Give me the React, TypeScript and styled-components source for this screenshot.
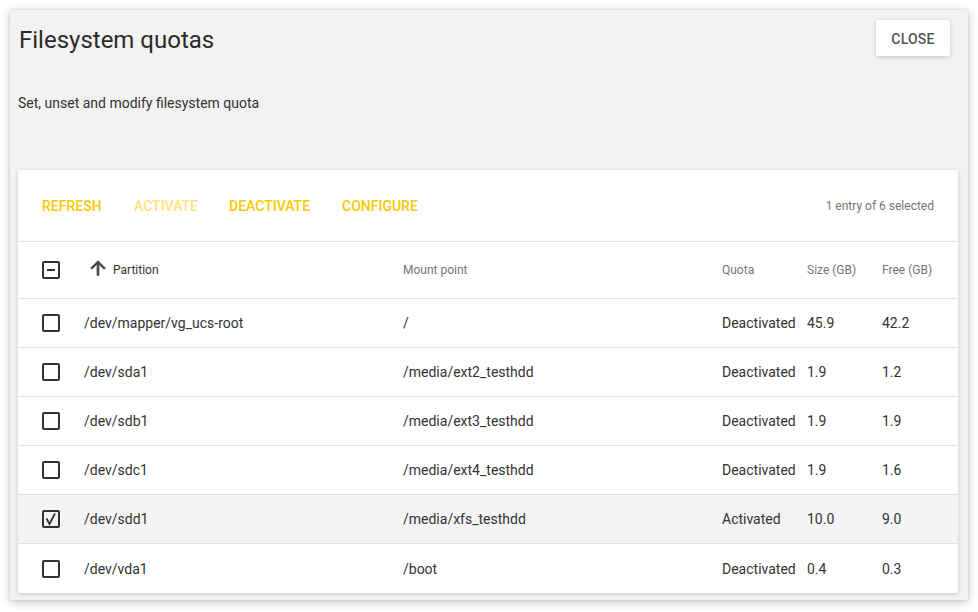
import React from "react";
import styled, { createGlobalStyle } from "styled-components";

const Global = createGlobalStyle`
  html, body { margin: 0; padding: 0; background: #ffffff; }
  body { font-family: Roboto, "Liberation Sans", Arial, sans-serif; color: #333; }
  * { box-sizing: border-box; }
`;

const Dialog = styled.div`
  margin: 10px;
  width: 958px;
  height: 590px;
  background: #f2f2f2;
  box-shadow: 0 2px 10px rgba(0, 0, 0, 0.22), 0 0 3px rgba(0, 0, 0, 0.12);
  padding: 10px 18px 7px 8px;
  display: flex;
  flex-direction: column;
  & > * { flex-shrink: 0; }
`;

const Header = styled.div`
  display: flex;
  align-items: flex-start;
  justify-content: space-between;
  height: 46px;
`;

const Title = styled.h1`
  margin: 6px 0 0 1px;
  font-size: 24px;
  font-weight: 400;
  line-height: 28px;
  color: #2a2a2a;
`;

const CloseButton = styled.button`
  height: 36px;
  width: 74px;
  border: none;
  border-radius: 2px;
  background: #fff;
  box-shadow: 0 1px 4px rgba(0, 0, 0, 0.2);
  font-family: inherit;
  font-size: 14px;
  font-weight: 500;
  color: #555;
  letter-spacing: 0.2px;
  padding-top: 2px;
`;

const Description = styled.p`
  margin: 27px 0 0 0;
  font-size: 14px;
  line-height: 20px;
  color: #333;
`;

const Card = styled.div`
  margin-top: 57px;
  width: 940px;
  background: #fff;
  box-shadow: 0 1px 4px rgba(0, 0, 0, 0.2);
  display: flex;
  flex-direction: column;
`;

const Toolbar = styled.div`
  height: 72px;
  display: flex;
  align-items: center;
  padding: 0 24px;
  border-bottom: 1px solid #e0e0e0;
`;

const Actions = styled.div`
  display: flex;
  flex: 1;
`;

const ActionButton = styled.button<{ $disabled?: boolean; $width: number }>`
  border: none;
  background: none;
  padding: 0;
  margin: 0;
  width: ${(p) => p.$width}px;
  text-align: left;
  font-family: inherit;
  font-size: 14px;
  font-weight: 500;
  text-transform: uppercase;
  color: ${(p) => (p.$disabled ? "#ffe37a" : "#fbc800")};
`;

const Status = styled.span`
  font-size: 12px;
  color: #757575;
`;

const Row = styled.div<{ $header?: boolean; $selected?: boolean; $last?: boolean }>`
  display: grid;
  grid-template-columns: 66px 319px 319px 85px 75px 76px;
  align-items: center;
  height: ${(p) => (p.$header ? 57 : 49)}px;
  border-bottom: ${(p) => (p.$last ? "none" : "1px solid #e0e0e0")};
  background: ${(p) => (p.$selected ? "#f4f4f4" : "#fff")};
`;

const Cell = styled.div<{ $head?: boolean; $sorted?: boolean }>`
  font-size: ${(p) => (p.$head ? 12 : 14)}px;
  color: ${(p) => (p.$head ? (p.$sorted ? "#333" : "#757575") : "#333")};
  white-space: nowrap;
  display: flex;
  align-items: center;
`;

const CheckCell = styled.div`
  padding-left: 24px;
  display: flex;
  align-items: center;
`;

const Box = styled.div`
  width: 18px;
  height: 18px;
  border: 2px solid #333;
  border-radius: 2px;
  display: flex;
  align-items: center;
  justify-content: center;
`;

const SortIcon = styled.svg`
  width: 22px;
  height: 22px;
  margin-left: 3px;
  margin-right: 4px;
  margin-top: -4px;
  fill: #444;
  stroke: #444;
  stroke-width: 0.9px;
`;

type CheckState = "none" | "checked" | "indeterminate";

const Checkbox = ({ state }: { state: CheckState }) => (
  <CheckCell>
    <Box>
      {state === "indeterminate" && (
        <svg width="14" height="14" viewBox="0 0 14 14">
          <rect x="3" y="6" width="8" height="2" fill="#333" />
        </svg>
      )}
      {state === "checked" && (
        <svg width="14" height="14" viewBox="0 0 14 14">
          <path d="M2.5 6.5 L5.5 12 L11 1.5" fill="none" stroke="#333" strokeWidth="1.8" />
        </svg>
      )}
    </Box>
  </CheckCell>
);

const rows = [
  ["/dev/mapper/vg_ucs-root", "/", "Deactivated", "45.9", "42.2"],
  ["/dev/sda1", "/media/ext2_testhdd", "Deactivated", "1.9", "1.2"],
  ["/dev/sdb1", "/media/ext3_testhdd", "Deactivated", "1.9", "1.9"],
  ["/dev/sdc1", "/media/ext4_testhdd", "Deactivated", "1.9", "1.6"],
  ["/dev/sdd1", "/media/xfs_testhdd", "Activated", "10.0", "9.0"],
  ["/dev/vda1", "/boot", "Deactivated", "0.4", "0.3"],
];

export default function App() {
  return (
    <>
      <Global />
      <Dialog>
        <Header>
          <Title>Filesystem quotas</Title>
          <CloseButton>CLOSE</CloseButton>
        </Header>
        <Description>Set, unset and modify filesystem quota</Description>
        <Card>
          <Toolbar>
            <Actions>
              <ActionButton $width={92}>Refresh</ActionButton>
              <ActionButton $width={95} $disabled>Activate</ActionButton>
              <ActionButton $width={113}>Deactivate</ActionButton>
              <ActionButton $width={100}>Configure</ActionButton>
            </Actions>
            <Status>1 entry of 6 selected</Status>
          </Toolbar>
          <Row $header>
            <Checkbox state="indeterminate" />
            <Cell $head $sorted>
              <SortIcon viewBox="0 0 24 24">
                <path d="M4 12l1.41 1.41L11 7.83V20h2V7.83l5.58 5.59L20 12l-8-8-8 8z" />
              </SortIcon>
              Partition
            </Cell>
            <Cell $head>Mount point</Cell>
            <Cell $head>Quota</Cell>
            <Cell $head>Size (GB)</Cell>
            <Cell $head>Free (GB)</Cell>
          </Row>
          {rows.map((r, i) => (
            <Row key={r[0]} $selected={i === 4} $last={i === rows.length - 1}>
              <Checkbox state={i === 4 ? "checked" : "none"} />
              {r.map((c, j) => (
                <Cell key={j}>{c}</Cell>
              ))}
            </Row>
          ))}
        </Card>
      </Dialog>
    </>
  );
}
